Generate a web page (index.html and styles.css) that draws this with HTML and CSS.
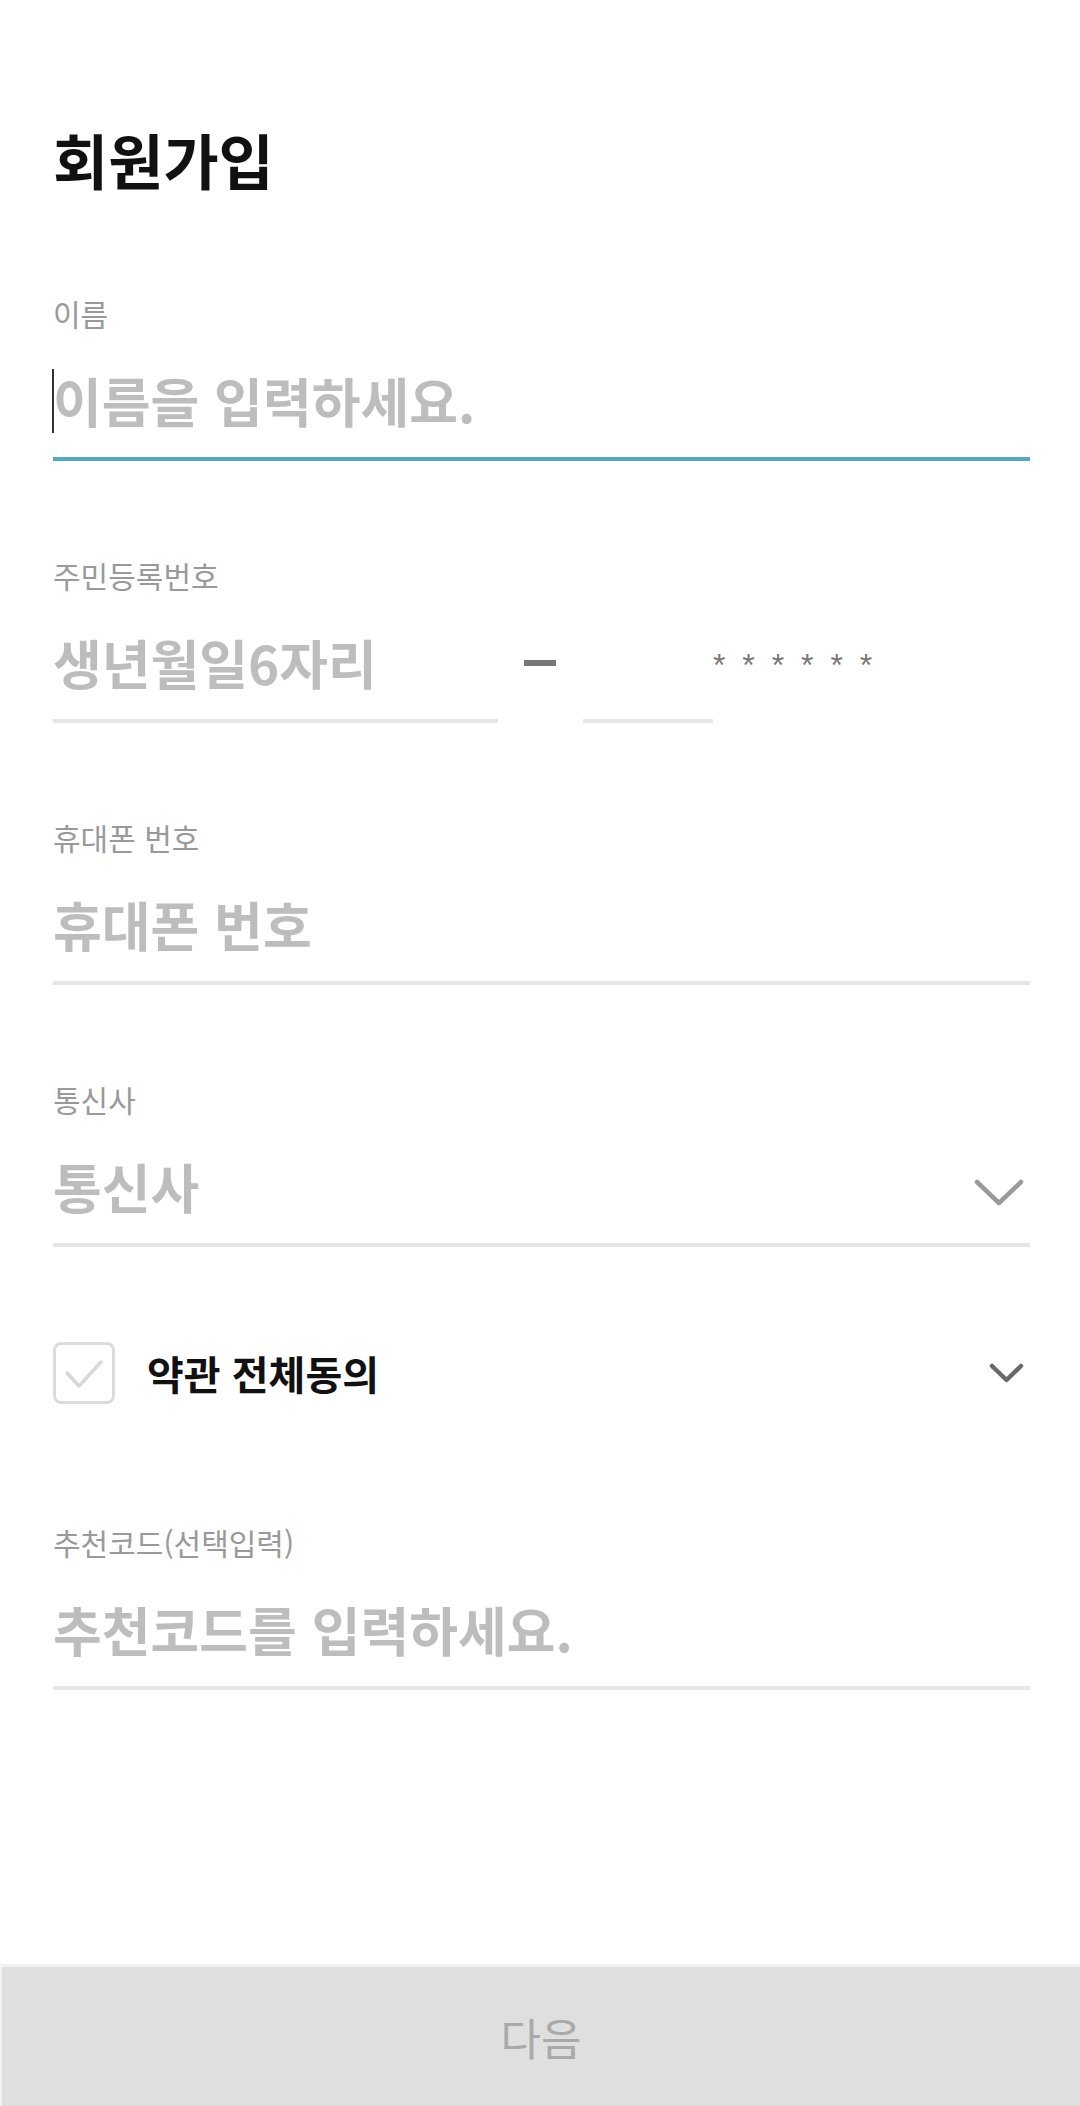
FILE: index.html
```html
<!DOCTYPE html>
<html lang="ko">
<head>
<meta charset="UTF-8" />
<meta name="viewport" content="width=device-width, initial-scale=1.0" />
<title>회원가입</title>
<link rel="stylesheet" href="styles.css">
</head>
<body>
<div class="page">
  <main class="form">
    <h1 class="title">회원가입</h1>

    <!-- 이름 -->
    <div class="field">
      <label class="field-label" for="name">이름</label>
      <div class="field-input active">
        <span class="caret"></span>
        <input id="name" type="text" placeholder="이름을 입력하세요." />
      </div>
    </div>

    <!-- 주민등록번호 -->
    <div class="field">
      <label class="field-label" for="birth">주민등록번호</label>
      <div class="rrn">
        <div class="field-input rrn-front">
          <input id="birth" type="text" placeholder="생년월일6자리" />
        </div>
        <span class="rrn-dash"></span>
        <div class="field-input rrn-back">
          <input type="text" />
        </div>
        <span class="rrn-mask">* * * * * *</span>
      </div>
    </div>

    <!-- 휴대폰 번호 -->
    <div class="field">
      <label class="field-label" for="phone">휴대폰 번호</label>
      <div class="field-input">
        <input id="phone" type="tel" placeholder="휴대폰 번호" />
      </div>
    </div>

    <!-- 통신사 -->
    <div class="field">
      <label class="field-label">통신사</label>
      <div class="field-input select">
        <span class="select-text">통신사</span>
        <svg class="chevron" width="50" height="27" viewBox="0 0 50 27">
          <path d="M3 3 L25 24 L47 3" fill="none" stroke="#9a9a9a" stroke-width="4.5" stroke-linecap="round" stroke-linejoin="round"/>
        </svg>
      </div>
    </div>

    <!-- 약관 -->
    <div class="agree">
      <span class="checkbox">
        <svg width="56" height="56" viewBox="0 0 56 56">
          <path d="M11 28 L23 41 L45 17" fill="none" stroke="#d8d8d8" stroke-width="3.5" stroke-linecap="round" stroke-linejoin="round"/>
        </svg>
      </span>
      <span class="agree-text">약관 전체동의</span>
      <svg class="chevron-sm" width="35" height="20" viewBox="0 0 35 20">
        <path d="M3 3 L17.5 17 L32 3" fill="none" stroke="#6a6a6a" stroke-width="4.5" stroke-linecap="round" stroke-linejoin="round"/>
      </svg>
    </div>

    <!-- 추천코드 -->
    <div class="field field-last">
      <label class="field-label" for="code">추천코드(선택입력)</label>
      <div class="field-input">
        <input id="code" type="text" placeholder="추천코드를 입력하세요." />
      </div>
    </div>
  </main>

  <button class="next-btn" disabled>다음</button>
</div>
</body>
</html>
```

FILE: styles.css
```css
body {
  margin: 0;
  padding: 0;
  font-family: "Noto Sans CJK KR", "Noto Sans", sans-serif;
  background: #fff;
}
.page {
  min-height: 100vh;
  display: flex;
  flex-direction: column;
}
.form {
  padding: 119px 50px 0 53px;
}
.title {
  margin: 0;
  font-size: 60px;
  line-height: 80px;
  font-weight: 700;
  color: #111;
}
.field {
  margin-top: 94px;
}
.field-label {
  display: block;
  font-size: 30px;
  line-height: 40px;
  color: #999;
  margin-bottom: 35px;
}
.field-input {
  position: relative;
  height: 64px;
  padding-bottom: 25px;
  border-bottom: 4px solid #e6e6e6;
}
.field-input.active {
  border-bottom-color: #52a9c8;
}
.field-input input {
  width: 100%;
  height: 64px;
  padding: 0;
  margin: 0;
  border: none;
  outline: none;
  background: transparent;
  font-family: "Noto Sans CJK KR", "Noto Sans", sans-serif;
  font-size: 53px;
  font-weight: 700;
  color: #333;
}
.field-input input::placeholder {
  color: #bdbdbd;
}
.caret {
  position: absolute;
  left: -1px;
  top: 1px;
  width: 2px;
  height: 64px;
  background: #333;
}

/* 주민등록번호 */
.rrn {
  display: flex;
  align-items: flex-start;
}
.rrn-front {
  width: 445px;
}
.rrn-dash {
  width: 32px;
  height: 6px;
  margin: 30px 27px 0 26px;
  background: #777;
}
.rrn-back {
  width: 130px;
}
.rrn-mask {
  font-family: "Liberation Sans", sans-serif;
  font-size: 32px;
  line-height: 64px;
  letter-spacing: 4px;
  color: #777;
  margin-top: 3px;
}

/* 통신사 */
.select {
  display: flex;
  align-items: center;
  justify-content: space-between;
}
.select-text {
  font-size: 53px;
  font-weight: 700;
  color: #bdbdbd;
  line-height: 64px;
}
.chevron {
  margin: 12px 6px 0 0;
}

/* 약관 */
.agree {
  margin-top: 95px;
  display: flex;
  align-items: center;
  height: 62px;
}
.checkbox {
  width: 56px;
  height: 56px;
  border: 3px solid #dcdcdc;
  border-radius: 8px;
  display: flex;
}
.agree-text {
  margin-left: 32px;
  font-size: 40px;
  font-weight: 700;
  color: #111;
  flex: 1;
}
.chevron-sm {
  margin-right: 6px;
}

.field-last {
  margin-top: 118px;
}

/* 다음 버튼 */
.next-btn {
  margin-top: auto;
  height: 142px;
  width: 100%;
  border: none;
  border-top: 3px solid #f2f2f2;
  border-left: 2px solid #f2f2f2;
  background: #dfdfdf;
  color: #a9a9a9;
  font-family: "Noto Sans CJK KR", "Noto Sans", sans-serif;
  font-size: 44px;
  padding: 0;
}
```
